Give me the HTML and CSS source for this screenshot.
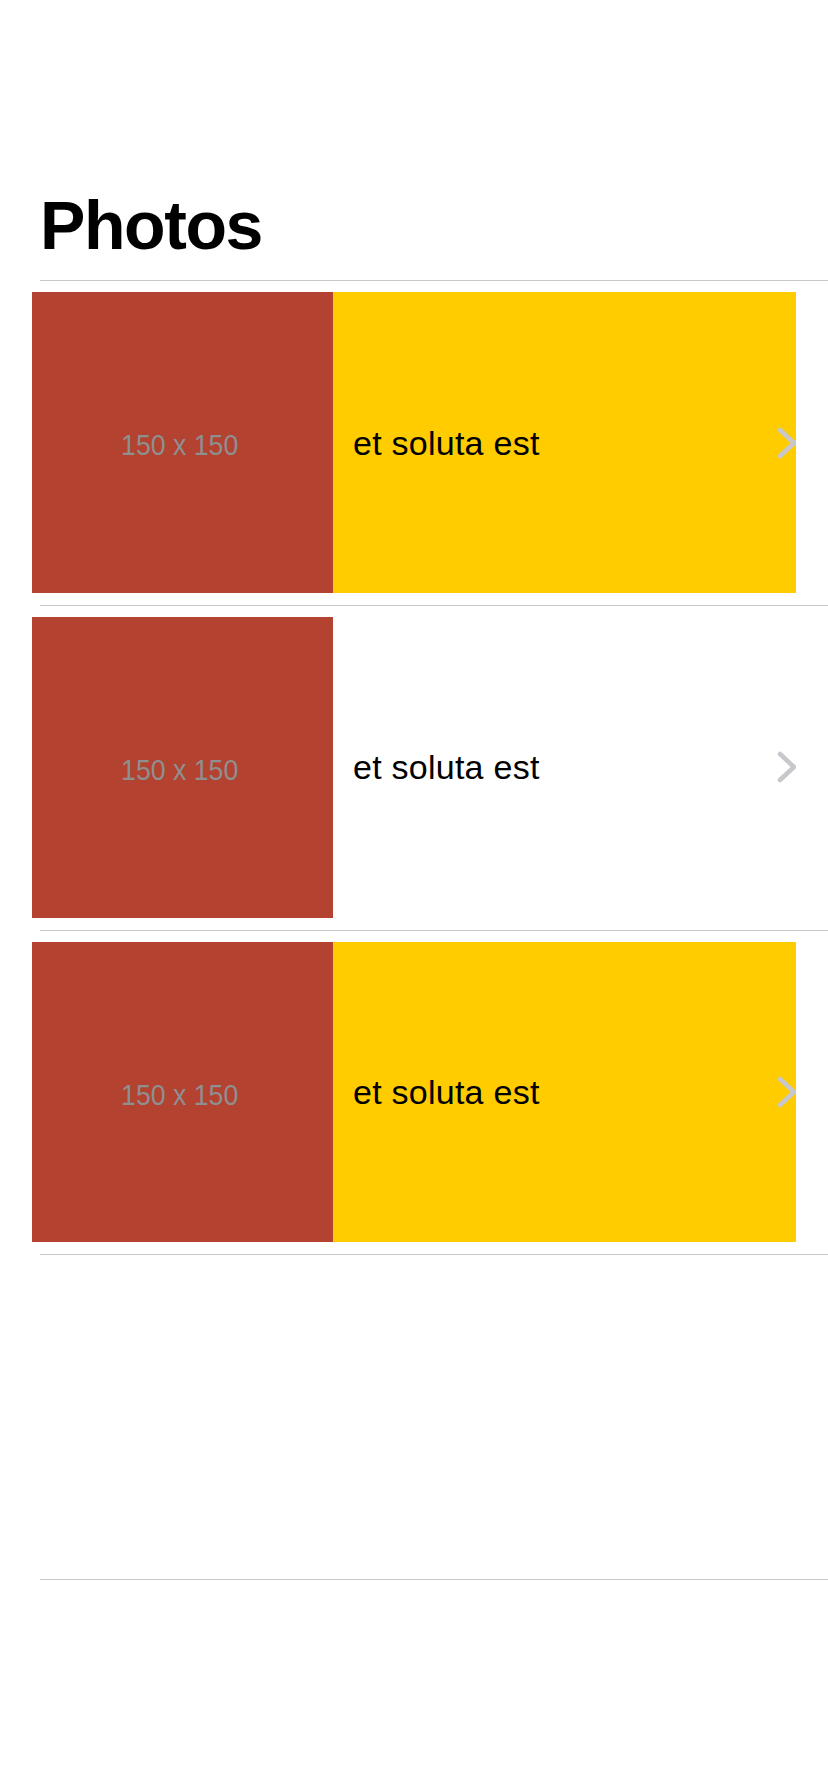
FILE: index.html
```html
<!DOCTYPE html>
<html lang="en">
<head>
<meta charset="utf-8">
<title>Photos</title>
<link rel="stylesheet" href="styles.css">
</head>
<body>
<div class="screen">
  <h1 class="title">Photos</h1>
  <div class="sep"></div>
  <ul class="list">
    <li class="row">
      <div class="cell cell-hl">
        <div class="thumb"><span class="thumb-label">150 x 150</span></div>
        <span class="cell-text">et soluta est</span>
        <svg class="chev" viewBox="0 0 22 32" width="22" height="32"><polyline points="4,3 18,16 4,29" fill="none" stroke="#c7c7cc" stroke-width="4.5" stroke-linecap="round" stroke-linejoin="round"/></svg>
      </div>
    </li>
    <li class="sep"></li>
    <li class="row">
      <div class="cell">
        <div class="thumb"><span class="thumb-label">150 x 150</span></div>
        <span class="cell-text">et soluta est</span>
        <svg class="chev" viewBox="0 0 22 32" width="22" height="32"><polyline points="4,3 18,16 4,29" fill="none" stroke="#c7c7cc" stroke-width="4.5" stroke-linecap="round" stroke-linejoin="round"/></svg>
      </div>
    </li>
    <li class="sep"></li>
    <li class="row">
      <div class="cell cell-hl">
        <div class="thumb"><span class="thumb-label">150 x 150</span></div>
        <span class="cell-text">et soluta est</span>
        <svg class="chev" viewBox="0 0 22 32" width="22" height="32"><polyline points="4,3 18,16 4,29" fill="none" stroke="#c7c7cc" stroke-width="4.5" stroke-linecap="round" stroke-linejoin="round"/></svg>
      </div>
    </li>
    <li class="sep"></li>
    <li class="row row-empty"></li>
    <li class="sep"></li>
  </ul>
</div>
</body>
</html>
```

FILE: styles.css
```css
html, body {
  margin: 0;
  padding: 0;
  background: #ffffff;
}

.screen {
  width: 828px;
  min-height: 1792px;
  font-family: "Liberation Sans", Arial, sans-serif;
  color: #000;
}

.title {
  margin: 0;
  padding: 184px 0 0 40px;
  height: 82px;
  font-size: 68px;
  line-height: 82px;
  font-weight: 700;
  letter-spacing: -1.4px;
  margin-bottom: 14px;
}

.list {
  list-style: none;
  margin: 0;
  padding: 0;
}

.sep {
  height: 1px;
  margin-left: 40px;
  background: #c8c8c8;
  list-style: none;
}

.row {
  padding: 11.25px 32px 12px 32px;
  height: 300.5px;
}

.cell {
  display: flex;
  align-items: center;
  height: 100%;
  overflow: hidden;
}

.cell-hl {
  background: #ffcc00;
}

.thumb {
  flex: 0 0 301px;
  height: 100%;
  background: #b34231;
  display: flex;
  align-items: center;
  justify-content: center;
}

.thumb-label {
  font-size: 29px;
  line-height: 32px;
  padding-top: 5px;
  margin-right: 6px;
  color: #8f8f8f;
  white-space: nowrap;
  transform: scaleX(0.92);
}

.cell-text {
  flex: 1;
  margin-left: 20px;
  font-size: 34px;
  line-height: 40px;
  letter-spacing: 0.25px;
}

.chev {
  flex: 0 0 22px;
  display: block;
  margin-right: -2px;
}
```
